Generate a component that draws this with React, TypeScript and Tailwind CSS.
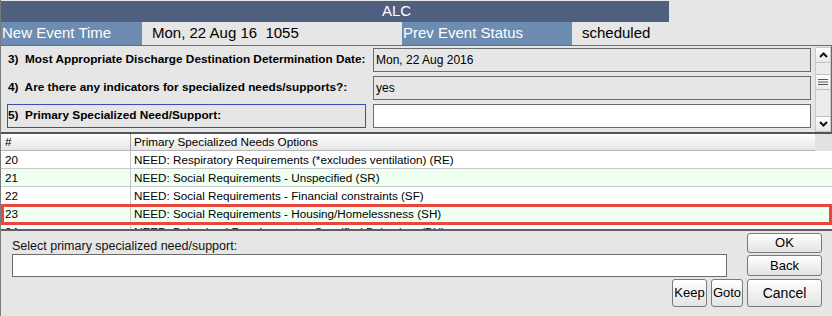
const rows = [
  { id: "20", text: "NEED: Respiratory Requirements (*excludes ventilation) (RE)" },
  { id: "21", text: "NEED: Social Requirements - Unspecified (SR)" },
  { id: "22", text: "NEED: Social Requirements - Financial constraints (SF)" },
  { id: "23", text: "NEED: Social Requirements - Housing/Homelessness (SH)" },
  { id: "24", text: "NEED: Behavioral Requirements - Specified Behaviors (BH)" },
];

const questions = [
  { label: "3)  Most Appropriate Discharge Destination Determination Date:", value: "Mon, 22 Aug 2016", focus: false, editable: false },
  { label: "4)  Are there any indicators for specialized needs/supports?:", value: "yes", focus: false, editable: false },
  { label: "5)  Primary Specialized Need/Support:", value: "", focus: true, editable: true },
];

function Btn({ label, className }: { label: string; className: string }) {
  return (
    <button
      className={
        "flex items-center justify-center rounded-[3px] border border-[#7a7a7a] bg-gradient-to-b from-white to-[#e3e3e3] text-black " +
        className
      }
    >
      {label}
    </button>
  );
}

export default function App() {
  return (
    <div className="flex h-[316px] w-[832px] flex-col overflow-hidden border-l border-[#7a7a7a] bg-[#e6e6e6] font-['Liberation_Sans',Arial,sans-serif] text-black">
      {/* title */}
      <div className="mt-px flex h-[21px] w-[668px] items-center bg-[#4f5f80] pl-[381px] text-[15px] text-white">
        ALC
      </div>

      {/* event header */}
      <div className="flex h-[23px] items-center text-[15px]">
        <div className="flex h-full w-[141px] items-center bg-[#6d8cb1] pl-px text-white">New Event Time</div>
        <div className="flex h-full w-[260px] items-center whitespace-pre pl-[10px]">Mon, 22 Aug 16  1055</div>
        <div className="flex h-full w-[170px] items-center bg-[#6d8cb1] pl-px text-white">Prev Event Status</div>
        <div className="flex h-full items-center pl-[10px]">scheduled</div>
      </div>

      {/* question panel */}
      <div className="flex h-[89px] border-t border-r border-b-2 border-[#6b6b6b] border-b-[#555]">
        <div className="flex flex-col gap-[4px] pt-[2px] pl-[6px]">
          {questions.map((q) => (
            <div key={q.label} className="flex h-[24px] items-stretch">
              <div
                className={
                  "flex w-[359px] items-center whitespace-pre text-[11.8px] font-bold " +
                  (q.focus ? "border border-[#3b4fae]" : "border border-transparent")
                }
              >
                {q.label}
              </div>
              <div
                className={
                  "ml-[7px] flex w-[438px] items-center border border-[#6b6b6b] pl-[2px] text-[12px] " +
                  (q.editable ? "bg-white" : "bg-[#e6e6e6]")
                }
              >
                {q.value}
              </div>
            </div>
          ))}
        </div>
        <div className="ml-[4px] mt-px flex h-[85px] w-[16px] flex-col border border-[#c8c8c8] bg-[#ececec]">
          <div className="flex h-[15px] items-center justify-center border-b border-[#c0c0c0] bg-gradient-to-b from-white to-[#e8e8e8]">
            <svg width="9" height="6" viewBox="0 0 9 6">
              <path d="M1 5 L4.5 1.5 L8 5" fill="none" stroke="#111" strokeWidth="2" />
            </svg>
          </div>
          <div className="mt-[11px] flex h-[16px] items-center justify-center border-y border-[#c0c0c0] bg-gradient-to-b from-white to-[#eaeaea]">
            <svg width="10" height="8" viewBox="0 0 10 8">
              <path d="M0 1.5 H10 M0 4 H10 M0 6.5 H10" stroke="#555" strokeWidth="1" />
            </svg>
          </div>
          <div className="flex-1" />
          <div className="flex h-[15px] items-center justify-center border-t border-[#c0c0c0] bg-gradient-to-b from-white to-[#e8e8e8]">
            <svg width="9" height="6" viewBox="0 0 9 6">
              <path d="M1 1 L4.5 4.5 L8 1" fill="none" stroke="#111" strokeWidth="2" />
            </svg>
          </div>
        </div>
      </div>

      {/* options table */}
      <div className="relative h-[95px] overflow-hidden bg-white text-[11.7px]">
        <div className="flex h-[17px] bg-[#e2e2e2]">
          <div className="flex w-[814px] border-b border-[#b5b5b5] bg-gradient-to-b from-white to-[#e6e6e6]">
            <div className="flex w-[130px] items-center border-r border-[#a0a0a0] pl-[4px]">#</div>
            <div className="flex items-center pl-[3px]">Primary Specialized Needs Options</div>
          </div>
        </div>
        {rows.map((r, i) => (
          <div
            key={r.id}
            className={
              "flex h-[18px] border-b border-[#c9c9c9] " + (i % 2 === 1 ? "bg-[#effff1]" : "bg-white")
            }
          >
            <div className="flex w-[130px] items-center border-r border-[#c9c9c9] pl-[4px]">{r.id}</div>
            <div className="flex items-center pl-[3px]">{r.text}</div>
          </div>
        ))}
        <div className="absolute left-0 top-[70px] h-[21px] w-[831px] border-[3px] border-[#e8473e]" />
      </div>

      {/* bottom panel */}
      <div className="flex flex-1 flex-col border-t-2 border-[#5f5f5f] pr-[10px]">
        <div className="flex justify-between">
          <div className="flex flex-col pl-[11px] pt-[7px]">
            <div className="h-[16px] text-[12.5px] leading-[16px] text-[#111]">Select primary specialized need/support:</div>
            <div className="h-[23px] w-[715px] border border-[#6b6b6b] bg-white" />
          </div>
          <div className="flex flex-col gap-[2px] pt-[2px]">
            <Btn label="OK" className="h-[20px] w-[75px] text-[13px]" />
            <Btn label="Back" className="h-[21px] w-[75px] text-[13px]" />
          </div>
        </div>
        <div className="mt-[2px] flex justify-end gap-[4px]">
          <Btn label="Keep" className="h-[28px] w-[35px] text-[13px]" />
          <Btn label="Goto" className="h-[28px] w-[32px] text-[13px]" />
          <Btn label="Cancel" className="h-[28px] w-[75px] text-[14px]" />
        </div>
      </div>
    </div>
  );
}
